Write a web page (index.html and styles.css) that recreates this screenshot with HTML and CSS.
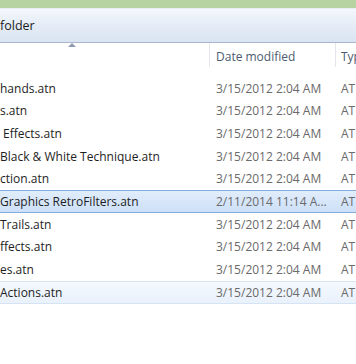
FILE: index.html
```html
<!doctype html>
<html lang="en">
<head>
    <meta charset="utf-8">
    <title>folder</title>
    <link rel="stylesheet" href="styles.css">
</head>
<body>
    <div class="window">
        <div class="titlebar"></div>
        <div class="addressbar">
            <span class="crumb">folder</span>
        </div>
        <div class="columns">
            <div class="col col-name"><span class="sort-caret"></span></div>
            <div class="col col-date">Date modified</div>
            <div class="col col-type">Typ</div>
        </div>
        <div class="rows">
            <div class="row"><span class="name">hands.atn</span><span class="date">3/15/2012 2:04 AM</span><span class="type">AT</span></div>
            <div class="row"><span class="name">s.atn</span><span class="date">3/15/2012 2:04 AM</span><span class="type">AT</span></div>
            <div class="row"><span class="name">&nbsp;Effects.atn</span><span class="date">3/15/2012 2:04 AM</span><span class="type">AT</span></div>
            <div class="row"><span class="name">Black &amp; White Technique.atn</span><span class="date">3/15/2012 2:04 AM</span><span class="type">AT</span></div>
            <div class="row"><span class="name">ction.atn</span><span class="date">3/15/2012 2:04 AM</span><span class="type">AT</span></div>
            <div class="row selected"><span class="name">Graphics RetroFilters.atn</span><span class="date">2/11/2014 11:14 A...</span><span class="type">AT</span></div>
            <div class="row"><span class="name">Trails.atn</span><span class="date">3/15/2012 2:04 AM</span><span class="type">AT</span></div>
            <div class="row"><span class="name">ffects.atn</span><span class="date">3/15/2012 2:04 AM</span><span class="type">AT</span></div>
            <div class="row"><span class="name">es.atn</span><span class="date">3/15/2012 2:04 AM</span><span class="type">AT</span></div>
            <div class="row hover"><span class="name">Actions.atn</span><span class="date">3/15/2012 2:04 AM</span><span class="type">AT</span></div>
        </div>
    </div>
</body>
</html>
```

FILE: styles.css
```css
body {
    margin: 0;
    background-color: #ffffff;
    font-family: "Open Sans", "Noto Sans", Arial, sans-serif;
    font-size: 12px;
    overflow: hidden;
}
.window {
    width: 356px;
    height: 364px;
    overflow: hidden;
}
.titlebar {
    height: 8px;
    background-color: #b8d3a2;
    border-bottom: 1px solid #e8eef2;
}
.addressbar {
    height: 33px;
    display: flex;
    align-items: center;
    background: linear-gradient(to bottom, #f4f7fc 0%, #e6edf7 45%, #d9e4f2 100%);
    border-bottom: 1px solid #a9b8cf;
}
.crumb {
    color: #1b1b1b;
    font-size: 12.5px;
}
.columns {
    height: 34px;
    display: flex;
}
.col {
    height: 24px;
    box-sizing: border-box;
    flex-shrink: 0;
    display: flex;
    align-items: center;
    padding-top: 2px;
    color: #4c5b6f;
}
.col-name {
    width: 210px;
    position: relative;
    border-right: 1px solid #e4e8ee;
}
.col-date {
    width: 126px;
    padding-left: 6px;
    border-right: 1px solid #e4e8ee;
}
.col-type {
    padding-left: 5px;
}
.sort-caret {
    position: absolute;
    left: 68px;
    top: 0;
    width: 0;
    height: 0;
    border-left: 4px solid transparent;
    border-right: 4px solid transparent;
    border-bottom: 4px solid #8b9aae;
}
.rows {
    display: flex;
    flex-direction: column;
}
.row {
    height: 22.67px;
    box-sizing: border-box;
    display: flex;
    align-items: center;
    border-top: 1px solid transparent;
    border-bottom: 1px solid transparent;
}
.row.selected {
    background: linear-gradient(to bottom, #e1edfb 0%, #cde0f8 100%);
    border-color: #84acdd;
}
.row.hover {
    background: linear-gradient(to bottom, #f5f9fe 0%, #e9f1fb 100%);
    border-color: #d6e3f3;
}
.name {
    width: 209px;
    flex-shrink: 0;
    color: #1e1e1e;
    white-space: pre;
}
.date {
    width: 119px;
    flex-shrink: 0;
    padding-left: 7px;
    color: #6a6a6a;
}
.type {
    padding-left: 6px;
    color: #6a6a6a;
}
```
